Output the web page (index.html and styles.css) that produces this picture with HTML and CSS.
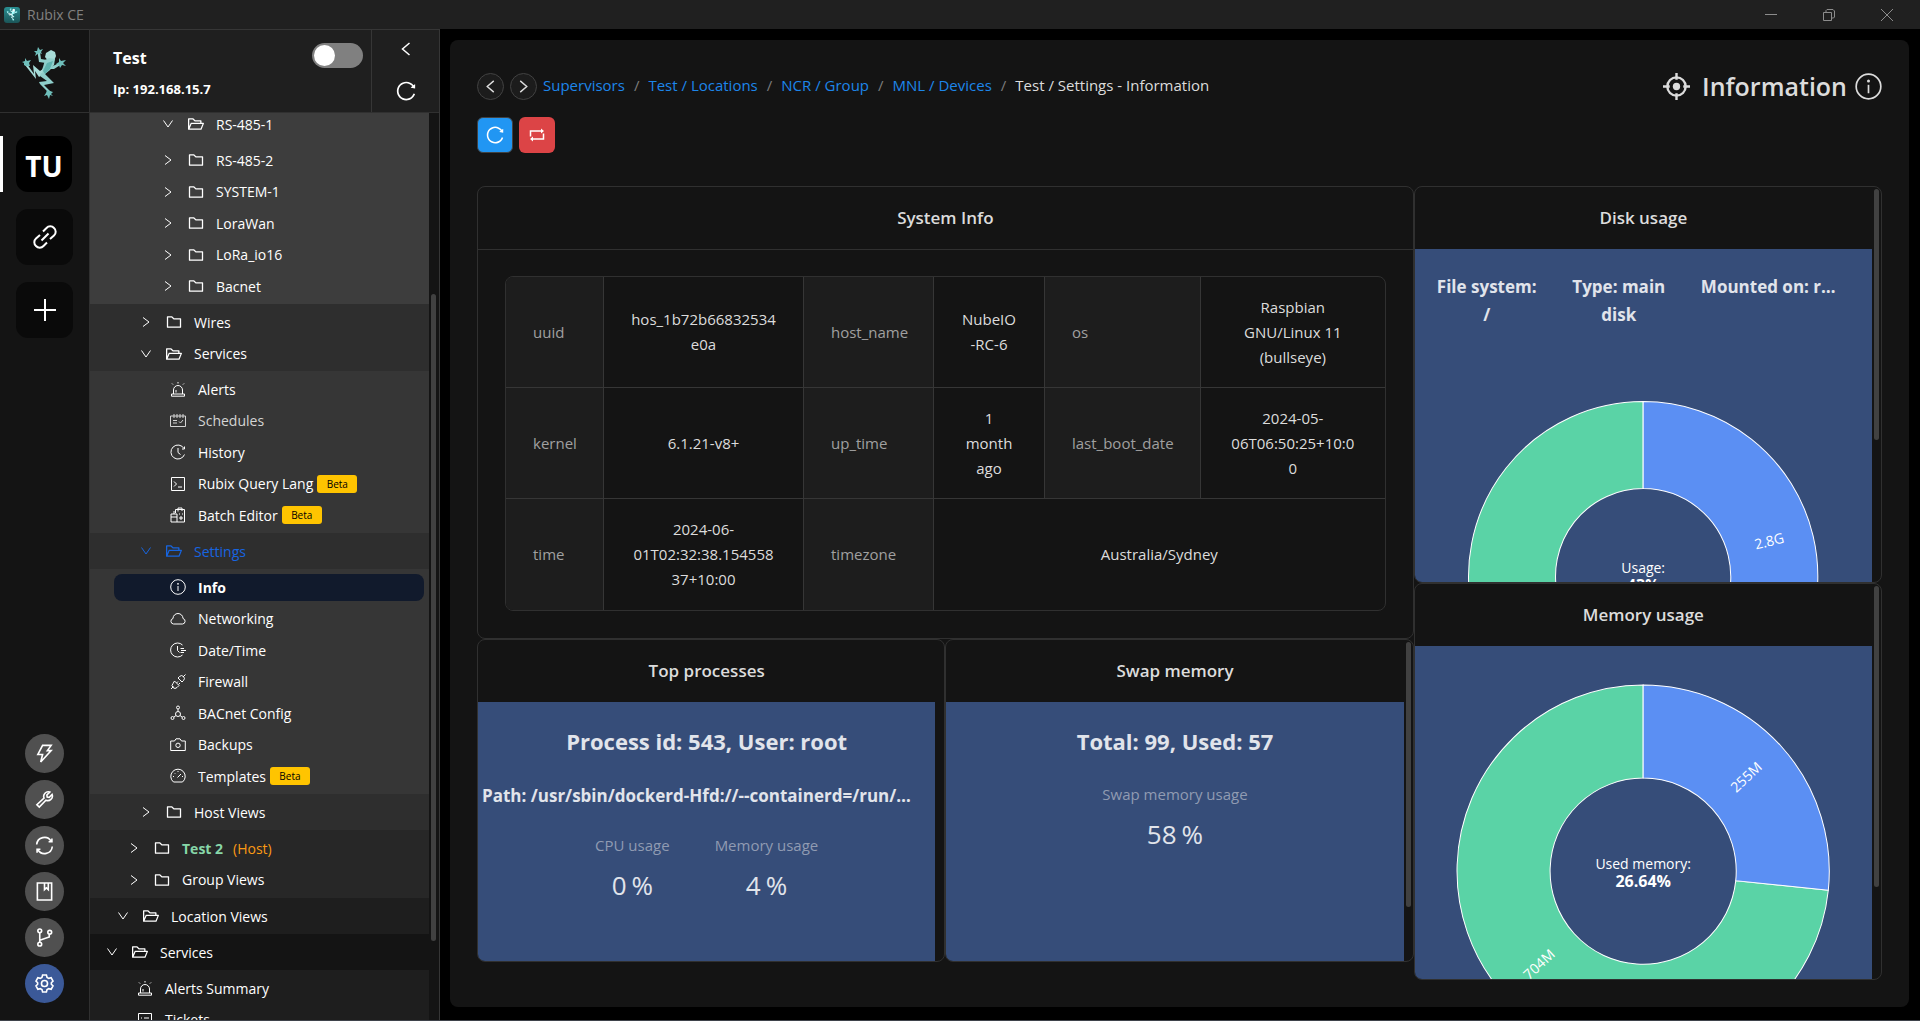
FILE: index.html
```html
<!DOCTYPE html>
<html lang="en">
<head>
<meta charset="utf-8">
<title>Rubix CE</title>
<link rel="stylesheet" href="styles.css">
</head>
<body>
<svg class="sprite" aria-hidden="true">
  <symbol id="i-frog" viewBox="0 0 44 52">
    <path d="M24 6l5-3 4 2 1 4-2 5-5 1-4-5z" fill="#a6dcd8"/>
    <path d="M23 13l4-2 6 1-1 6-4 5-5 4-5 1 3-8z" fill="#8fcfcb"/>
    <path d="M25 16l6-2-3 8-5 5-2-3z" fill="#5fb3af"/>
    <path d="M24 16l-7-1-1.500-10h2.500l1 7 6 1z" fill="#8fcfcb"/>
    <path d="M17 6l-4 3 1-3-2-2 3 0 1-4 2 3 3-1-2 3 1 2z" fill="#6fbfbb"/>
    <path d="M29 20l10-5 1 2-8 5-4 0z" fill="#8fcfcb"/>
    <path d="M37 15l0-4 2 3 5-1-3 3 3 3-4-1-2 3-1-3-3-1z" fill="#6fbfbb"/>
    <path d="M3 18l2-1 7 10-1-9 7 6 3-2-1 6-3 2-4-6 1 8z" fill="#a6dcd8"/>
    <path d="M4 19l-2-1 0-2-2-1 3-1 0-3 2 3 4-1-2 3 1 3z" fill="#6fbfbb"/>
    <path d="M19 26l4 1 9 9-10 2 7 7-2 1-9-9-1-2 8-1-7-5z" fill="#8fcfcb"/>
    <path d="M25 43l3 1 3 1-2 2 2 2-3-1-1 4-2-4-3 1 2-3z" fill="#6fbfbb"/>
  </symbol>
  <symbol id="i-folder" viewBox="64 64 896 896"><path fill="currentColor" d="M880 298.400H521L403.700 186.200a8.150 8.150 0 00-5.500-2.200H144c-17.700 0-32 14.300-32 32v592c0 17.700 14.300 32 32 32h736c17.700 0 32-14.300 32-32V330.400c0-17.700-14.300-32-32-32zM840 768H184V256h188.500l119.600 114.400H840V768z"/></symbol>
  <symbol id="i-open" viewBox="64 64 896 896"><path fill="currentColor" d="M928 444H820V330.400c0-17.700-14.300-32-32-32H473L355.700 186.200a8.150 8.150 0 00-5.500-2.200H96c-17.700 0-32 14.300-32 32v592c0 17.700 14.300 32 32 32h698c13 0 24.800-7.900 29.700-20l134-332c1.500-3.800 2.300-7.900 2.300-12 0-17.700-14.300-32-32-32zM136 256h188.500l119.600 114.400H748V444H238c-13 0-24.800 7.900-29.700 20L136 643.200V256zm635.300 512H159l103.300-256h612.400L771.300 768z"/></symbol>
  <symbol id="i-reload" viewBox="64 64 896 896"><path fill="currentColor" d="M909.100 209.300l-56.400 44.100C775.800 155.100 656.200 92 521.900 92 290 92 102.300 279.500 102 511.500 101.700 743.700 289.800 932 521.900 932c181.300 0 335.800-115 394.600-276.100 1.500-4.200-.7-8.900-4.900-10.300l-56.700-19.500a8 8 0 00-10.100 4.800c-1.800 5-3.800 10-5.900 14.900-17.300 41-42.100 77.800-73.700 109.400A344.770 344.770 0 01655.900 829c-42.300 17.900-87.400 27-133.800 27-46.500 0-91.500-9.100-133.800-27A341.500 341.500 0 01279 755.200a342.160 342.160 0 01-73.700-109.400c-17.900-42.400-27-87.400-27-133.900s9.100-91.500 27-133.900c17.300-41 42.100-77.800 73.700-109.400 31.600-31.600 68.400-56.400 109.300-73.800 42.300-17.900 87.400-27 133.800-27 46.500 0 91.500 9.100 133.800 27a341.500 341.500 0 01109.300 73.800c9.900 9.900 19.200 20.400 27.800 31.400l-60.200 47a8 8 0 003 14.100l175.600 43c5 1.200 9.900-2.600 9.900-7.700l.8-180.900c-.1-6.600-7.800-10.300-13-6.200z"/></symbol>
  <symbol id="i-right" viewBox="0 0 16 16"><path class="ln" d="M5 3.500L11 8l-6 4.500"/></symbol>
  <symbol id="i-left" viewBox="0 0 16 16"><path class="ln" d="M11.500 2L4.500 8l7 6"/></symbol>
  <symbol id="i-next" viewBox="0 0 16 16"><path class="ln" d="M4.500 2l7 6-7 6"/></symbol>
  <symbol id="i-down" viewBox="0 0 16 16"><path class="ln" d="M3.500 4.500L8 11l4.500-6.500"/></symbol>
  <symbol id="i-link" viewBox="0 0 24 24"><path class="ln" d="M10 6.500l3.500-3.500a5 5 0 0 1 7.500 0 5 5 0 0 1 0 7.500L17 14M14 17.500L10.500 21A5 5 0 0 1 3 21a5 5 0 0 1 0-7.500L7 10M8.500 15.500l7-7"/></symbol>
  <symbol id="i-plus" viewBox="0 0 24 24"><path class="ln" d="M12 1v22M1 12h22"/></symbol>
  <symbol id="i-alert" viewBox="0 0 16 16"><path class="ln" d="M3.500 13V9a4.500 4.500 0 0 1 9 0v4M1.500 13h13v2.200h-13zM6 11.500V9M8 1v1.500M2 2.500l1 1M14 2.500l-1 1"/></symbol>
  <symbol id="i-schedule" viewBox="0 0 16 16"><path class="ln" d="M.5 3h15v10.500H.5zM4 1v4M7 1v4M10 1v4M13 1v4M3 7.500h4M3 10h4M9 8.500l1.500 1.500L13 7"/></symbol>
  <symbol id="i-history" viewBox="0 0 16 16"><path class="ln" d="M14.500 10.500A7 7 0 1 1 14 4.500M14.500 2.500v2.500H12M8 4v4.500l2.500 2"/></symbol>
  <symbol id="i-code" viewBox="0 0 16 16"><path class="ln" d="M1.500 1.500h13v13h-13zM4 5.500L6.500 8 4 10.500M8 11h4"/></symbol>
  <symbol id="i-batch" viewBox="0 0 16 16"><path class="ln" d="M1 7h6v8H1zM1 10h6M4 7V4M5.500 6V2.500h9V15H7M8 4.500V1h4v3M9 7h1M12 7h1M10 10h2v2h-2z"/></symbol>
  <symbol id="i-info" viewBox="0 0 16 16"><circle class="ln" cx="8" cy="8" r="7.300"/><path class="ln" d="M8 7v5"/><circle cx="8" cy="4.800" r=".9" fill="currentColor"/></symbol>
  <symbol id="i-cloud" viewBox="0 0 16 16"><path class="ln" d="M3.500 13h9a2.800 2.800 0 0 0 .5-5.500 5 5 0 0 0-10 0A2.800 2.800 0 0 0 3.500 13z"/></symbol>
  <symbol id="i-clock" viewBox="0 0 16 16"><path class="ln" d="M12.500 3A7 7 0 1 0 12.500 13M7.500 4v4.500l2 2M10.500 6.500H14M11 8.500h5M10.500 10.500H14"/></symbol>
  <symbol id="i-plug" viewBox="0 0 16 16"><path class="ln" d="M1 15l2.500-2.500M13 3l2.500-2.500M8 4l1.500-1.500a2.500 2.500 0 0 1 4 4L12 8zM4.500 7L9 11.500l-2 2a2.800 2.800 0 0 1-4-4zM6.500 9L8 7.500M8.500 10.500L10 9"/></symbol>
  <symbol id="i-nodes" viewBox="0 0 16 16"><circle class="ln" cx="8" cy="2.500" r="1.500"/><circle class="ln" cx="8" cy="9" r="2.500"/><circle class="ln" cx="2.500" cy="13" r="1.500"/><circle class="ln" cx="13.500" cy="13" r="1.500"/><path class="ln" d="M8 4v2.500M6 10.500L4 12M10 10.500l2 1.500"/></symbol>
  <symbol id="i-camera" viewBox="0 0 16 16"><path class="ln" d="M.7 4h3.800L6 1.800h4L11.500 4h3.800v9.500H.7z"/><circle class="ln" cx="8" cy="8.300" r="2.200"/></symbol>
  <symbol id="i-dash" viewBox="0 0 16 16"><path class="ln" d="M3.500 14a7.200 7.200 0 1 1 9 0zM7.500 9.500L11 6M8 3v1M3 8.500h1M12 8.500h1M4.500 5l.7.700"/></symbol>
  <symbol id="i-ticket" viewBox="0 0 16 16"><path class="ln" d="M1.500 1.500h13v13h-13zM4 6h1M7 6h5M4 9h1M7 9h5"/></symbol>
  <symbol id="i-bolt" viewBox="0 0 20 20"><path class="ln" d="M8 1.500h9L13 7h4L6 19l2-8H3z"/></symbol>
  <symbol id="i-wrench" viewBox="0 0 20 20"><path class="ln" d="M15.500 2.200l-3 3 .3 2.200 2.200.3 3-3a4.800 4.800 0 0 1-6.500 6L4.500 18 2 15.500l7.500-7a4.800 4.800 0 0 1 6-6.300z"/></symbol>
  <symbol id="i-sync" viewBox="0 0 20 20"><path class="ln" d="M1.800 9A8.200 8.200 0 0 1 17 5.500M18.200 11A8.200 8.200 0 0 1 3 14.500M17.800 2.500V6h-3.500M2.200 17.500V14h3.500"/></symbol>
  <symbol id="i-book" viewBox="0 0 20 20"><path class="ln" d="M2.500 1h15v18h-15zM10 1v7l2-1.800L14 8V1"/></symbol>
  <symbol id="i-branch" viewBox="0 0 20 20"><circle class="ln" cx="5" cy="3" r="2"/><circle class="ln" cx="5" cy="17" r="2"/><circle class="ln" cx="15.500" cy="4.500" r="2"/><path class="ln" d="M5 5v10M5 13l10-3.500v-3"/></symbol>
  <symbol id="i-gear" viewBox="0 0 20 20"><path class="ln" d="M8 1h4l.7 2.600 1.800 1L17 4l2 3.500-1.800 1.700v1.600L19 12.500 17 16l-2.500-.6-1.800 1L12 19H8l-.7-2.600-1.800-1L3 16l-2-3.500 1.800-1.700V9.200L1 7.500 3 4l2.500.6 1.800-1z"/><circle class="ln" cx="10" cy="10" r="3.200"/></symbol>
  <symbol id="i-retweet" viewBox="0 0 16 16"><path class="ln" d="M1.500 9.500V4H13M14.500 6.500V12H3"/><path fill="currentColor" d="M12 1.500L15 4l-3 2.500zM4 9.500L1 12l3 2.500z"/></symbol>
  <symbol id="i-aim" viewBox="0 0 28 28"><circle class="ln" cx="14" cy="14" r="9.500"/><circle cx="14" cy="14" r="3.800" fill="currentColor"/><path class="ln" d="M14 0v7M14 21v7M0 14h7M21 14h7"/></symbol>
</svg>

<div class="app">
  <header class="titlebar">
    <span class="app-icon"><svg class="frog-mini"><use href="#i-frog"/></svg></span>
    <span class="app-name">Rubix CE</span>
    <div class="window-buttons">
      <button type="button" aria-label="Minimize"><svg viewBox="0 0 12 12"><path class="ln" d="M0 5.500h12"/></svg></button>
      <button type="button" aria-label="Restore"><svg viewBox="0 0 12 12"><path class="ln" d="M.5 3.500h8v8h-8zM3 3V1.500L4 .5h6l1.500 1.500v6L10.500 9H9"/></svg></button>
      <button type="button" aria-label="Close"><svg viewBox="0 0 12 12"><path class="ln" d="M0 0l12 12M12 0L0 12"/></svg></button>
    </div>
  </header>

  <div class="workspace">
    <aside class="rail">
      <div class="rail-logo"><svg class="frog"><use href="#i-frog"/></svg></div>
      <div class="rail-spaces">
        <div class="space-slot active"><button class="space current" type="button">TU</button></div>
        <div class="space-slot"><button class="space" type="button" aria-label="Connections"><svg><use href="#i-link"/></svg></button></div>
        <div class="space-slot"><button class="space" type="button" aria-label="Add"><svg><use href="#i-plus"/></svg></button></div>
      </div>
      <div class="rail-tools">
        <button type="button" aria-label="Actions"><svg><use href="#i-bolt"/></svg></button>
        <button type="button" aria-label="Tools"><svg><use href="#i-wrench"/></svg></button>
        <button type="button" aria-label="Sync"><svg><use href="#i-sync"/></svg></button>
        <button type="button" aria-label="Docs"><svg><use href="#i-book"/></svg></button>
        <button type="button" aria-label="Releases"><svg><use href="#i-branch"/></svg></button>
        <button class="primary" type="button" aria-label="Settings"><svg><use href="#i-gear"/></svg></button>
      </div>
    </aside>

    <aside class="sidebar">
      <div class="side-head">
        <div class="host">
          <div class="host-text"><strong class="host-name">Test</strong><strong class="host-ip">Ip: 192.168.15.7</strong></div>
          <input class="switch" type="checkbox" aria-label="Advanced mode">
        </div>
        <div class="side-actions">
          <button type="button" aria-label="Collapse"><svg class="s16"><use href="#i-left"/></svg></button>
          <button type="button" aria-label="Reload"><svg class="s20"><use href="#i-reload"/></svg></button>
        </div>
      </div>
      <div class="tree-wrap">
        <nav class="tree">
          <div class="group g5 cut">
            <button class="row l5" type="button"><svg><use href="#i-down"/></svg><svg><use href="#i-open"/></svg>RS-485-1</button>
          </div>
          <div class="group g5">
            <button class="row l5" type="button"><svg><use href="#i-right"/></svg><svg><use href="#i-folder"/></svg>RS-485-2</button>
            <button class="row l5" type="button"><svg><use href="#i-right"/></svg><svg><use href="#i-folder"/></svg>SYSTEM-1</button>
            <button class="row l5" type="button"><svg><use href="#i-right"/></svg><svg><use href="#i-folder"/></svg>LoraWan</button>
            <button class="row l5" type="button"><svg><use href="#i-right"/></svg><svg><use href="#i-folder"/></svg>LoRa_io16</button>
            <button class="row l5" type="button"><svg><use href="#i-right"/></svg><svg><use href="#i-folder"/></svg>Bacnet</button>
          </div>
          <div class="group g3">
            <button class="row l4" type="button"><svg><use href="#i-right"/></svg><svg><use href="#i-folder"/></svg>Wires</button>
            <button class="row l4" type="button"><svg><use href="#i-down"/></svg><svg><use href="#i-open"/></svg>Services</button>
          </div>
          <div class="group g4">
            <a class="leaf" href="#"><svg><use href="#i-alert"/></svg>Alerts</a>
            <a class="leaf dim" href="#"><svg><use href="#i-schedule"/></svg>Schedules</a>
            <a class="leaf" href="#"><svg><use href="#i-history"/></svg>History</a>
            <a class="leaf" href="#"><svg><use href="#i-code"/></svg>Rubix Query Lang<span class="beta">Beta</span></a>
            <a class="leaf" href="#"><svg><use href="#i-batch"/></svg>Batch Editor<span class="beta">Beta</span></a>
          </div>
          <div class="group g3">
            <button class="row l4 open" type="button"><svg><use href="#i-down"/></svg><svg><use href="#i-open"/></svg>Settings</button>
          </div>
          <div class="group g4">
            <a class="leaf selected" href="#"><svg><use href="#i-info"/></svg>Info</a>
            <a class="leaf" href="#"><svg><use href="#i-cloud"/></svg>Networking</a>
            <a class="leaf" href="#"><svg><use href="#i-clock"/></svg>Date/Time</a>
            <a class="leaf" href="#"><svg><use href="#i-plug"/></svg>Firewall</a>
            <a class="leaf" href="#"><svg><use href="#i-nodes"/></svg>BACnet Config</a>
            <a class="leaf" href="#"><svg><use href="#i-camera"/></svg>Backups</a>
            <a class="leaf" href="#"><svg><use href="#i-dash"/></svg>Templates<span class="beta">Beta</span></a>
          </div>
          <div class="group g3">
            <button class="row l4" type="button"><svg><use href="#i-right"/></svg><svg><use href="#i-folder"/></svg>Host Views</button>
          </div>
          <div class="group g2">
            <button class="row l3" type="button"><svg><use href="#i-right"/></svg><svg><use href="#i-folder"/></svg><b class="online">Test 2</b><span class="kind">(Host)</span></button>
            <button class="row l3" type="button"><svg><use href="#i-right"/></svg><svg><use href="#i-folder"/></svg>Group Views</button>
          </div>
          <div class="group g1">
            <button class="row l2" type="button"><svg><use href="#i-down"/></svg><svg><use href="#i-open"/></svg>Location Views</button>
          </div>
          <div class="group g0">
            <button class="row l1" type="button"><svg><use href="#i-down"/></svg><svg><use href="#i-open"/></svg>Services</button>
          </div>
          <div class="group g1">
            <a class="leaf top" href="#"><svg><use href="#i-alert"/></svg>Alerts Summary</a>
            <a class="leaf top" href="#"><svg><use href="#i-ticket"/></svg>Tickets</a>
          </div>
        </nav>
        <div class="tree-scroll"><span></span></div>
      </div>
    </aside>

    <main class="main">
      <section class="panel">
        <div class="panel-head">
          <div class="crumb-bar">
            <button class="round" type="button" aria-label="Back"><svg><use href="#i-left"/></svg></button>
            <button class="round" type="button" aria-label="Forward"><svg><use href="#i-next"/></svg></button>
            <nav class="crumbs">
              <a href="#">Supervisors</a><i>/</i><a href="#">Test / Locations</a><i>/</i><a href="#">NCR / Group</a><i>/</i><a href="#">MNL / Devices</a><i>/</i><span>Test / Settings - Information</span>
            </nav>
          </div>
          <h1 class="page-title"><svg><use href="#i-aim"/></svg><span>Information</span><svg><use href="#i-info"/></svg></h1>
        </div>
        <div class="toolbar">
          <button class="tool blue" type="button" aria-label="Refresh"><svg class="s18"><use href="#i-reload"/></svg></button>
          <button class="tool red" type="button" aria-label="Restart"><svg class="s16"><use href="#i-retweet"/></svg></button>
        </div>

        <div class="board">
          <div class="board-left">
            <section class="card system">
              <h2 class="card-title ruled">System Info</h2>
              <div class="card-pad">
                <table class="info">
                  <colgroup><col class="c1"><col class="c2"><col class="c3"><col class="c4"><col class="c5"><col></colgroup>
                  <tr><th scope="row">uuid</th><td>hos_1b72b66832534<br>e0a</td><th scope="row">host_name</th><td>NubeIO<br>-RC-6</td><th scope="row">os</th><td>Raspbian<br>GNU/Linux 11<br>(bullseye)</td></tr>
                  <tr><th scope="row">kernel</th><td>6.1.21-v8+</td><th scope="row">up_time</th><td>1<br>month<br>ago</td><th scope="row">last_boot_date</th><td>2024-05-<br>06T06:50:25+10:0<br>0</td></tr>
                  <tr><th scope="row">time</th><td>2024-06-<br>01T02:32:38.154558<br>37+10:00</td><th scope="row">timezone</th><td colspan="3">Australia/Sydney</td></tr>
                </table>
              </div>
            </section>
            <div class="pair">
              <section class="card small">
                <h2 class="card-title">Top processes</h2>
                <div class="fill stats-body">
                  <h3 class="stat-head">Process id: 543, User: root</h3>
                  <p class="path">Path: /usr/sbin/dockerd-Hfd://--containerd=/run/containerd/containerd.sock</p>
                  <dl class="stats">
                    <div><dt>CPU usage</dt><dd>0<span>%</span></dd></div>
                    <div><dt>Memory usage</dt><dd>4<span>%</span></dd></div>
                  </dl>
                </div>
              </section>
              <section class="card small">
                <h2 class="card-title">Swap memory</h2>
                <div class="fill stats-body">
                  <h3 class="stat-head">Total: 99, Used: 57</h3>
                  <dl class="stats">
                    <div><dt>Swap memory usage</dt><dd>58<span>%</span></dd></div>
                  </dl>
                </div>
                <span class="thumb swap-thumb"></span>
              </section>
            </div>
          </div>
          <div class="board-right">
            <section class="card tall">
              <h2 class="card-title">Disk usage</h2>
              <div class="fill">
                <div class="disk-facts"><h3>File system: /</h3><h3>Type: main disk</h3><h3 class="clip">Mounted on: root</h3></div>
                <svg class="donut" viewBox="0 0 457 440">
                  <path class="free" d="M228 72.500A174.500 174.500 0 1 0 307 402.600L267.600 325A87.500 87.500 0 1 1 228 159.500z"/>
                  <path class="used" d="M228 72.500A174.500 174.500 0 0 1 307 402.600L267.600 325A87.500 87.500 0 0 0 228 159.500z"/>
                  <text class="slice" x="354" y="217" transform="rotate(-14 354 212)">2.8G</text>
                  <text class="hub" x="228" y="244">Usage:</text>
                  <text class="hub-value" x="228" y="262">43%</text>
                </svg>
              </div>
              <span class="thumb disk-thumb"></span>
            </section>
            <section class="card tall">
              <h2 class="card-title">Memory usage</h2>
              <div class="fill">
                <svg class="donut" viewBox="0 0 457 440">
                  <path class="free" d="M228 39A186 186 0 1 0 413 244.100L320.500 234.500A93 93 0 1 1 228 132z"/>
                  <path class="used" d="M228 39A186 186 0 0 1 413 244.100L320.500 234.500A93 93 0 0 0 228 132z"/>
                  <text class="slice" x="331" y="136" transform="rotate(-43 331 131)">255M</text>
                  <text class="slice" x="124" y="323" transform="rotate(-43 124 318)">704M</text>
                  <text class="hub" x="228" y="223">Used memory:</text>
                  <text class="hub-value" x="228" y="241">26.64%</text>
                </svg>
              </div>
              <span class="thumb mem-thumb"></span>
            </section>
          </div>
        </div>
      </section>
    </main>
  </div>
</div>
</body>
</html>
```

FILE: styles.css
```css
* { box-sizing: border-box; }

body {
  margin: 0;
  background: #000;
  color: #fff;
  font: 14px/24px "Open Sans", "Noto Sans", sans-serif;
}

button { border: 0; padding: 0; background: none; color: inherit; font: inherit; }
a { color: inherit; text-decoration: none; }
h1, h2, h3, p, dl, dd { margin: 0; }
svg { flex: none; }

.sprite { display: none; }
.ln { fill: none; stroke: currentColor; }

.app {
  display: flex;
  flex-direction: column;
  height: 100vh;
  overflow: hidden;
  border-bottom: 1px solid #3f434b;
}

/* Title bar */
.titlebar {
  display: flex;
  align-items: center;
  flex: none;
  height: 29px;
  padding: 0 4px;
  background: #202020;
  color: #808080;
}
.app-icon {
  display: flex;
  align-items: center;
  justify-content: center;
  width: 16px;
  height: 16px;
  margin-right: 7px;
  border-radius: 3px;
  background: linear-gradient(#2a8f92, #1b5558);
}
.frog-mini { width: 12px; height: 13px; filter: brightness(1.500); }
.window-buttons { display: flex; margin-left: auto; color: #8c8c8c; }
.window-buttons button { display: grid; place-items: center; width: 58px; height: 29px; }
.window-buttons svg { width: 12px; height: 12px; }

.workspace { display: flex; flex: 1; min-height: 0; }

/* Left rail */
.rail {
  display: flex;
  flex-direction: column;
  flex: none;
  width: 90px;
  border-right: 1px solid #303030;
  border-top: 1px solid #363636;
  background: #141414;
}
.rail-logo {
  display: grid;
  place-items: center;
  height: 83px;
  padding: 4px 1px 0 0;
  border-bottom: 1px solid #303030;
}
.frog { width: 44px; height: 52px; }
.rail-spaces { display: flex; flex-direction: column; gap: 17px; padding-top: 23px; }
.space-slot { padding-left: 13px; border-left: 3px solid transparent; }
.space-slot.active { border-left-color: #fff; }
.space {
  display: grid;
  place-items: center;
  width: 57px;
  height: 56px;
  border-radius: 12px;
  background: #0a0a0a;
}
.space.current { width: 56px; padding-top: 3px; background: #000; font-size: 28px; font-weight: 700; }
.space svg { width: 24px; height: 24px; stroke-width: 2; }
.rail-tools {
  display: flex;
  flex-direction: column;
  align-items: center;
  gap: 7px;
  margin-top: auto;
  padding-bottom: 17px;
}
.rail-tools button {
  display: grid;
  place-items: center;
  width: 39px;
  height: 39px;
  border-radius: 50%;
  background: #505050;
}
.rail-tools .primary { background: #3b5998; }
.rail-tools svg { width: 19px; height: 19px; stroke-width: 1.700; }

/* Sidebar */
.sidebar {
  display: flex;
  flex-direction: column;
  flex: none;
  width: 350px;
  border-top: 1px solid #363636;
  border-right: 1px solid #363636;
  background: #141414;
}
.side-head { display: flex; flex: none; height: 83px; border-bottom: 1px solid #303030; background: #1f1f1f; }
.host { display: flex; flex: 1; justify-content: space-between; padding: 13px 8px 0 23px; border-right: 1px solid #363636; }
.host-text { display: flex; flex-direction: column; gap: 5px; }
.host-name { padding-top: 1px; font-size: 16px; line-height: 28px; }
.host-ip { font-size: 13px; line-height: 24px; }
.switch {
  appearance: none;
  width: 51px;
  height: 25px;
  margin: 0;
  padding: 2px;
  border-radius: 13px;
  background: #808080;
}
.switch::before { content: ""; display: block; width: 21px; height: 21px; border-radius: 50%; background: #fff; }
.side-actions { display: flex; flex-direction: column; align-items: center; justify-content: space-between; width: 67px; padding: 9px 0 11px; }
.side-actions button { display: grid; place-items: center; width: 24px; height: 20px; }
.s16 { width: 16px; height: 16px; stroke-width: 1.500; }
.s18 { width: 18px; height: 18px; }
.s20 { width: 20px; height: 20px; }

.tree-wrap { display: flex; flex: 1; min-height: 0; }
.tree { flex: 1; min-width: 0; overflow: hidden; }
.tree-scroll { width: 10px; padding: 181px 3px 0 2px; }
.tree-scroll span { display: block; height: 647px; border-radius: 3px; background: #414141; }

.group { display: grid; grid-auto-rows: 32px 31px; padding: 2px 0; }
.group.cut { grid-auto-rows: 22px; padding: 0 0 7px; }
.g5 { background: #3d3d3d; }
.g4 { background: #363636; }
.g3 { background: #2e2e2e; }
.g2 { padding-bottom: 3px; background: #272727; }
.g1 { background: #1e1e1e; }
.g0 { background: #141414; }

.row, .leaf { display: flex; align-items: center; gap: 12px; white-space: nowrap; line-height: 27px; }
.row svg, .leaf svg { width: 16px; height: 16px; }
.l1 { padding-left: 14px; }
.l2 { padding-left: 25px; }
.l3 { padding-left: 36px; }
.l4 { padding-left: 48px; }
.l5 { padding-left: 70px; }
.leaf { margin: 0 5px 0 24px; padding-left: 56px; }
.leaf.top { padding-left: 23px; }
.dim { color: #d4d4d4; }
.row.open { color: #1765e0; }
.selected { align-self: center; border-radius: 8px; background: #111a2c; font-weight: 700; }
.online { color: #87d7a9; }
.kind { margin-left: -2px; color: #fa9a14; }
.beta {
  margin-left: -8px;
  width: 40px;
  border-radius: 3px;
  background: #ffc400;
  color: #000;
  font-size: 10px;
  line-height: 18px;
  text-align: center;
}

/* Main panel */
.main { flex: 1; min-width: 0; padding: 11px 11px 0 10px; }
.panel { padding: 33px 27px 27px; border-radius: 8px; background: #141414; color: #dcdcdc; }
.panel-head { display: flex; align-items: center; justify-content: space-between; height: 27px; }
.crumb-bar { display: flex; align-items: center; gap: 6px; }
.round {
  display: grid;
  place-items: center;
  width: 27px;
  height: 27px;
  border: 1px solid #424242;
  border-radius: 50%;
  background: #1c1c1c;
}
.round svg { width: 15px; height: 15px; stroke-width: 1.500; }
.crumbs { display: flex; gap: 9px; padding-bottom: 3px; font-size: 15px; white-space: nowrap; }
.crumbs a { color: #1d86ea; }
.crumbs i { color: #7c7c7c; font-style: normal; }
.page-title { display: flex; align-items: center; font-size: 25px; font-weight: 600; line-height: 36px; }
.page-title span { margin: 0 8px 0 12px; padding-bottom: 2px; }
.page-title svg { width: 27px; height: 27px; }
.page-title svg:first-child { stroke-width: 2.500; }

.toolbar { display: flex; gap: 6px; margin-top: 17px; }
.tool { display: grid; place-items: center; width: 36px; height: 36px; border-radius: 6px; color: #fff; }
.blue { border: 1px solid #424242; background: #2196f3; }
.red { background: #dc4446; }

/* Cards */
.board { display: grid; grid-template-columns: minmax(0, 2fr) minmax(0, 1fr); align-items: start; margin-top: 33px; }
.pair { display: grid; grid-template-columns: minmax(0, 1fr) minmax(0, 1fr); }
.card {
  position: relative;
  display: flex;
  flex-direction: column;
  overflow: hidden;
  border: 1px solid #303030;
  border-radius: 8px;
}
.small { height: 323px; }
.tall { height: 397px; }
.card-title { flex: none; padding-right: 9px; font-size: 17px; font-weight: 600; line-height: 62px; text-align: center; }
.card-title.ruled { padding-right: 0; border-bottom: 1px solid #303030; }
.card-pad { padding: 26px 27px 27px; }
.fill { flex: 1; min-height: 0; margin-right: 9px; background: #364d79; color: #e1e4eb; }
.thumb { position: absolute; top: 2px; right: 2px; width: 5px; border-radius: 3px; background: #414141; }
.disk-thumb { height: 251px; }
.mem-thumb { height: 301px; }
.swap-thumb { height: 265px; }

.info {
  width: 100%;
  table-layout: fixed;
  border-collapse: separate;
  border-spacing: 0;
  border: 1px solid #303030;
  border-radius: 8px;
  overflow: hidden;
  font-size: 15px;
  line-height: 25px;
}
.c1 { width: 98px; }
.c2 { width: 200px; }
.c3 { width: 130px; }
.c4 { width: 111px; }
.c5 { width: 156px; }
.info th, .info td { height: 111px; padding: 0; border-right: 1px solid #363636; border-bottom: 1px solid #363636; text-align: center; white-space: nowrap; }
.info th { padding-left: 27px; background: #1d1d1d; color: #a0a0a0; font-weight: 400; text-align: left; }
.info tr > :last-child { border-right: 0; }
.info tr:last-child > * { border-bottom: 0; }

.stats-body { padding-top: 24px; text-align: center; }
.stat-head { margin-bottom: 26px; font-size: 22px; font-weight: 700; line-height: 30px; }
.path { margin: 0 20px 23px 4px; overflow: hidden; font-size: 17px; font-weight: 700; line-height: 28px; text-overflow: ellipsis; white-space: nowrap; }
.stats { display: flex; justify-content: center; gap: 45px; }
.stats dt { color: #909bb2; font-size: 15px; }
.stats dd { margin-top: 8px; font-size: 26px; line-height: 40px; }
.stats dd span { margin-left: 5px; }

.disk-facts { display: grid; grid-template-columns: 132fr 132fr 170fr; padding: 24px 17px 0 6px; text-align: center; }
.disk-facts h3 { padding: 0 12px; font-size: 17px; font-weight: 700; line-height: 28px; }
.disk-facts .clip { padding: 0 16px; overflow: hidden; text-overflow: ellipsis; white-space: nowrap; }
.donut { display: block; width: 100%; }
.free { fill: #5ad3a6; stroke: #fff; }
.used { fill: #5b8ff3; stroke: #fff; }
.donut text { fill: #fff; font-size: 14px; text-anchor: middle; }
.donut .hub-value { font-size: 16px; font-weight: 700; }
```
